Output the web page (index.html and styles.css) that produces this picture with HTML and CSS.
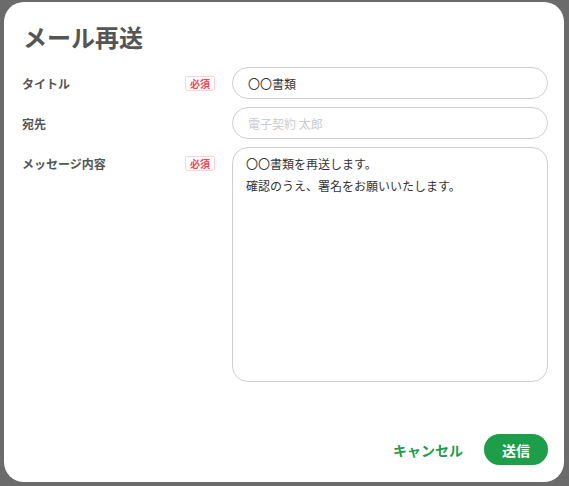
FILE: index.html
```html
<!DOCTYPE html>
<html lang="ja">
<head>
    <meta charset="UTF-8">
    <meta name="viewport" content="width=device-width, initial-scale=1.0">
    <title>メール再送</title>
    <link rel="stylesheet" href="styles.css">
</head>
<body>
    <div class="backdrop">
        <div class="modal">
            <h2 class="modal-title">メール再送</h2>

            <div class="form-row">
                <div class="label-cell">
                    <span class="label">タイトル</span>
                    <span class="required">必須</span>
                </div>
                <input class="field" type="text" value="〇〇書類">
            </div>

            <div class="form-row">
                <div class="label-cell">
                    <span class="label">宛先</span>
                </div>
                <input class="field" type="text" placeholder="電子契約 太郎">
            </div>

            <div class="form-row">
                <div class="label-cell">
                    <span class="label">メッセージ内容</span>
                    <span class="required">必須</span>
                </div>
                <textarea class="field message">〇〇書類を再送します。
確認のうえ、署名をお願いいたします。</textarea>
            </div>

            <div class="actions">
                <button class="btn-cancel">キャンセル</button>
                <button class="btn-send">送信</button>
            </div>
        </div>
    </div>
</body>
</html>
```

FILE: styles.css
```css
* {
    box-sizing: border-box;
}
body {
    margin: 0;
    background: #6b6b6b;
    font-family: "Noto Sans CJK JP", "Noto Sans", sans-serif;
}
.backdrop {
    padding: 2px 5px 4px 4px;
    height: 486px;
}
.modal {
    background: #fff;
    border-radius: 20px;
    height: 480px;
    padding: 19px 16px 17px 18px;
    display: flex;
    flex-direction: column;
}
.modal-title {
    margin: 0 0 14px 1px;
    font-size: 24px;
    line-height: 32px;
    font-weight: bold;
    color: #555;
}
.form-row {
    display: flex;
    margin-bottom: 8px;
}
.label-cell {
    width: 210px;
    flex-shrink: 0;
    display: flex;
    justify-content: space-between;
    align-items: flex-start;
    padding: 8px 17px 0 0;
}
.label {
    font-size: 12px;
    line-height: 17px;
    font-weight: bold;
    color: #555;
}
.required {
    font-size: 10px;
    line-height: 13px;
    font-weight: bold;
    color: #f0455d;
    border: 1px solid #fdd3d9;
    border-radius: 2px;
    padding: 0 4px;
    margin-top: 1px;
}
.field {
    flex: 1;
    height: 32px;
    border: 1px solid #cfcfcf;
    border-radius: 16px;
    padding: 0 15px;
    font-family: inherit;
    font-size: 12px;
    color: #333;
    background: #fff;
    outline: none;
}
.field::placeholder {
    color: #ccc;
}
.message {
    height: 235px;
    padding: 5px 13px;
    line-height: 22px;
    resize: none;
}
.actions {
    margin-top: auto;
    display: flex;
    justify-content: flex-end;
    align-items: center;
    gap: 21px;
}
.btn-cancel {
    background: none;
    border: none;
    color: #1e9b4b;
    font-family: inherit;
    font-size: 14px;
    font-weight: bold;
    padding: 0;
    cursor: pointer;
}
.btn-send {
    background: #1e9e4a;
    color: #fff;
    border: none;
    border-radius: 16px;
    width: 64px;
    height: 31px;
    font-family: inherit;
    font-size: 14px;
    font-weight: bold;
    cursor: pointer;
}
```
